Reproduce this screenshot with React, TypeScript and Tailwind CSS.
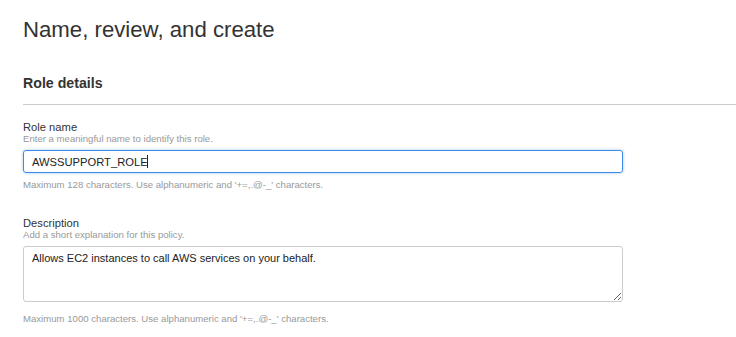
import React from 'react';

const font = "font-['Liberation_Sans',Arial,sans-serif]";

interface FieldProps {
  label: string;
  hint: string;
  note: string;
  noteGap: string;
  children: React.ReactNode;
}

const Field: React.FC<FieldProps> = ({ label, hint, note, noteGap, children }) => (
  <div className="flex flex-col">
    <label className="text-[11.2px] leading-[12px] text-[#333]">{label}</label>
    <span className="text-[9.6px] leading-[11px] text-[#999]">{hint}</span>
    <div className="mt-[6px] relative">{children}</div>
    <span className={`${noteGap} text-[9.6px] leading-[11px] text-[#999]`}>{note}</span>
  </div>
);

export default function App() {
  return (
    <div className={`${font} bg-white w-[736px] h-[337px] overflow-hidden pl-[23px]`}>
      <h1 className="pt-[17px] text-[22.2px] leading-[26px] text-[#333]">Name, review, and create</h1>

      <h2 className="mt-[32px] text-[14.2px] leading-[16px] font-bold text-[#333]">Role details</h2>
      <div className="mt-[13px] border-t border-[#ccc]" />

      <div className="mt-[16px] flex flex-col gap-[27px]">
        <Field
          label="Role name"
          hint="Enter a meaningful name to identify this role."
          note="Maximum 128 characters. Use alphanumeric and '+=,.@-_' characters."
          noteGap="mt-[6px]"
        >
          <input
            defaultValue="AWSSUPPORT_ROLE"
            className="block w-[600px] h-[23px] px-[8px] rounded-[3px] border border-[#3b8ce8] shadow-[0_0_3px_rgba(59,140,232,0.5)] outline-none text-[11.2px] text-[#222]"
          />
          {/* text caret */}
          <span className="absolute left-[124px] top-[5px] h-[13px] w-px bg-[#222]" />
        </Field>

        <Field
          label="Description"
          hint="Add a short explanation for this policy."
          note="Maximum 1000 characters. Use alphanumeric and '+=,.@-_' characters."
          noteGap="mt-[11px]"
        >
          <textarea
            defaultValue="Allows EC2 instances to call AWS services on your behalf."
            className="block w-[600px] h-[56px] px-[8px] py-[4px] rounded-[3px] border border-[#ccc] outline-none text-[11px] leading-[14px] text-[#222]"
          />
        </Field>
      </div>
    </div>
  );
}
